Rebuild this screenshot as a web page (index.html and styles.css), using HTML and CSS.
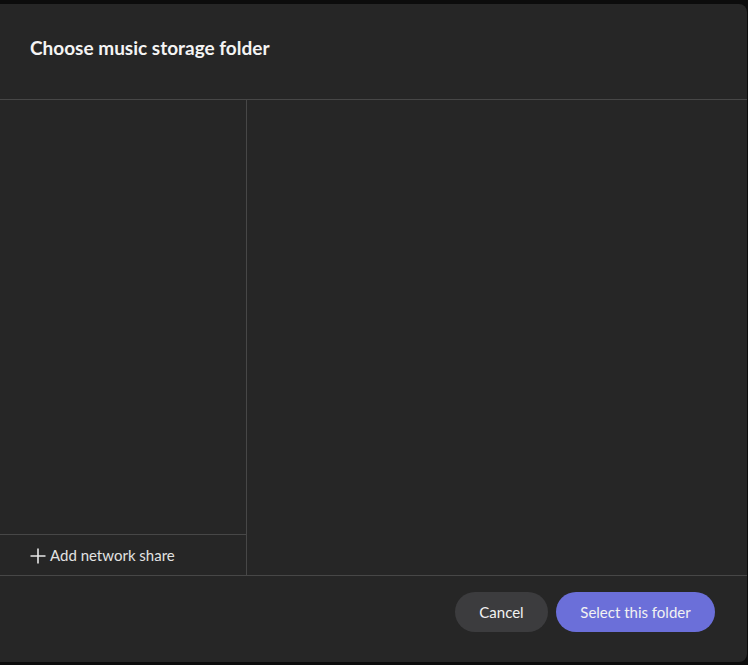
FILE: index.html
```html
<!DOCTYPE html>
<html lang="en">
<head>
    <meta charset="UTF-8">
    <meta name="viewport" content="width=device-width, initial-scale=1.0">
    <title>Choose music storage folder</title>
    <link rel="stylesheet" href="styles.css">
</head>
<body>
    <div class="dialog">
        <header class="dialog-header">
            <h1>Choose music storage folder</h1>
        </header>

        <div class="dialog-body">
            <aside class="sidebar">
                <ul class="places"></ul>
                <button class="add-share">
                    <svg class="plus" width="16" height="16" viewBox="0 0 16 16">
                        <path d="M8 0.5v15M0.5 8h15" stroke="#e6e6e6" stroke-width="1.6" fill="none"/>
                    </svg>
                    Add network share
                </button>
            </aside>
            <section class="folder-view"></section>
        </div>

        <footer class="dialog-footer">
            <button class="btn btn-cancel">Cancel</button>
            <button class="btn btn-primary">Select this folder</button>
        </footer>
    </div>
</body>
</html>
```

FILE: styles.css
```css
html, body {
    height: 100%;
}

body {
    margin: 0;
    background-color: #0c0c0c;
    font-family: Lato, "Open Sans", sans-serif;
    color: #ececec;
    overflow: hidden;
}

.dialog {
    margin-top: 4px;
    width: 747px;
    height: 658px;
    background-color: #262626;
    border-radius: 0 8px 8px 0;
    display: flex;
    flex-direction: column;
}

.dialog-header {
    height: 96px;
    padding: 0 30px;
    display: flex;
    align-items: center;
    border-bottom: 1px solid #474747;
    box-sizing: border-box;
}

.dialog-header h1 {
    margin: 0 0 8px;
    font-size: 19px;
    font-weight: 700;
    color: #f4f4f4;
}

.dialog-body {
    flex: 1;
    display: flex;
    border-bottom: 1px solid #474747;
    min-height: 0;
}

.sidebar {
    width: 246px;
    border-right: 1px solid #474747;
    display: flex;
    flex-direction: column;
}

.places {
    flex: 1;
    list-style: none;
    margin: 0;
    padding: 0;
}

.add-share {
    height: 41px;
    border: none;
    border-top: 1px solid #474747;
    background: transparent;
    color: #e2e2e2;
    font-family: inherit;
    font-size: 15px;
    display: flex;
    align-items: center;
    gap: 4px;
    padding: 0 30px;
    cursor: pointer;
    box-sizing: border-box;
}

.plus {
    margin-top: 1px;
}

.folder-view {
    flex: 1;
}

.dialog-footer {
    height: 86px;
    display: flex;
    justify-content: flex-end;
    align-items: flex-start;
    gap: 8px;
    padding: 16px 32px 0;
    box-sizing: border-box;
}

.btn {
    height: 40px;
    border: none;
    border-radius: 20px;
    font-family: inherit;
    font-size: 15px;
    color: #f2f2f2;
    cursor: pointer;
}

.btn-cancel {
    width: 93px;
    background-color: #3c3c3e;
}

.btn-primary {
    width: 159px;
    background-color: #6b6fd9;
}
```
